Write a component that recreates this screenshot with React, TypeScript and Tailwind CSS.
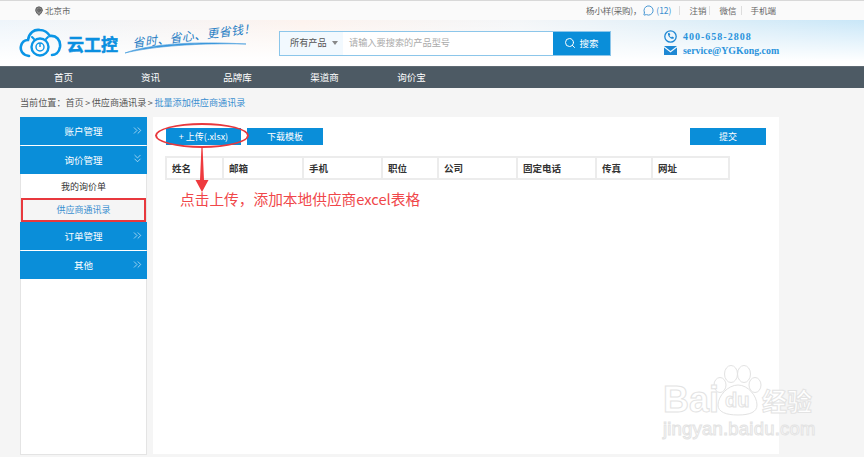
import { ChevronsRight, ChevronsDown, Search, MapPin, MessageCircle } from 'lucide-react';

const cn = "[font-family:'Noto_Sans_CJK_SC','Liberation_Sans',sans-serif]";

const columns = [
  { label: '姓名', width: 'w-[55px]' },
  { label: '邮箱', width: 'w-[80px]' },
  { label: '手机', width: 'w-[79px]' },
  { label: '职位', width: 'w-[56px]' },
  { label: '公司', width: 'w-[79px]' },
  { label: '固定电话', width: 'w-[79px]' },
  { label: '传真', width: 'w-[56px]' },
  { label: '网址', width: 'w-[77px]' },
];

function Logo() {
  return (
    <div className="flex items-center">
      <svg width="44" height="32" viewBox="0 0 44 32" fill="none" className="text-[#0a95e6]">
        <path d="M10 29 C3 28 1 23 2 19 C3 15 6 13 9 13 C10 6 15 2 21 3 C26 3 29 6 31 9 C37 8 42 13 41 20 C40 26 36 28 33 28" stroke="currentColor" strokeWidth="2.6" strokeLinecap="round" />
        <circle cx="21" cy="20" r="8.5" stroke="currentColor" strokeWidth="2.4" />
        <circle cx="21" cy="20" r="4" stroke="currentColor" strokeWidth="1.4" />
        <path d="M21 16v4" stroke="currentColor" strokeWidth="1.4" />
        <path d="M13 10l2 2M29 10l-2 2" stroke="currentColor" strokeWidth="2" strokeLinecap="round" />
      </svg>
      <span className="ml-[4px] text-[17px] leading-none font-bold text-[#0a8fe0] [-webkit-text-stroke:0.5px_#0a8fe0]">云工控</span>
    </div>
  );
}

function Slogan() {
  return (
    <div className="relative ml-[6px] w-[124px] h-[34px]">
      <span className="absolute left-[8px] top-[2px] -rotate-[7deg] italic text-[12px] leading-[14px] tracking-[0.4px] whitespace-nowrap text-[#2a7fc4] [font-family:'Noto_Sans_CJK_SC',serif]">
        省时、省心、更省钱！
      </span>
      <svg width="124" height="34" viewBox="0 0 124 34" className="absolute left-0 top-0" fill="none">
        <path d="M1 27 C25 18 70 15 122 18 C75 17 30 20 1 27Z" fill="#3b97dc" stroke="#3b97dc" strokeWidth="0.6" />
      </svg>
    </div>
  );
}

function TopBar() {
  return (
    <div className="h-[20px] flex items-center bg-[#fafafa] border-t border-[#d8d8d8] text-[8.5px] text-[#666]">
      <div className="ml-[34px] flex items-center gap-[1px]">
        <MapPin size={10} className="text-[#555]" fill="#888" />
        <span>北京市</span>
      </div>
      <div className="ml-auto mr-[88px] flex items-center">
        <span className="tracking-[-0.2px]">杨小样(采购)，</span>
        <MessageCircle size={11} className="text-[#3a8fd0] ml-[2px]" />
        <span className="ml-[2px] text-[#3a8fd0]">(12)</span>
        <span className="ml-[8px] h-[9px] border-l border-[#ddd]" />
        <span className="ml-[9px]">注销</span>
        <span className="ml-[3px] h-[9px] border-l border-[#ddd]" />
        <span className="ml-[9px]">微信</span>
        <span className="ml-[5px] h-[9px] border-l border-[#ddd]" />
        <span className="ml-[8px]">手机端</span>
      </div>
    </div>
  );
}

function Header() {
  return (
    <div className="h-[46px] flex items-center bg-[linear-gradient(180deg,rgba(255,255,255,0)_0%,#ffffff_90%),linear-gradient(90deg,#eef5fb_0%,#fdf3ee_35%,#f4f6f8_60%,#c9e7f8_100%)]">
      <div className="ml-[19px] flex items-center">
        <Logo />
        <Slogan />
      </div>
      <div className="ml-[31px] w-[332px] h-[25px] flex border border-[#8cc6ea] bg-white">
        <div className="w-[63px] flex items-center pl-[10px] gap-[5px] bg-[#f2f9fe] text-[9.2px] text-[#555]">
          <span>所有产品</span>
          <span className="w-0 h-0 border-x-[3.5px] border-x-transparent border-t-[4px] border-t-[#888]" />
        </div>
        <div className="flex-1 flex items-center pl-[6px] text-[9.2px] text-[#aaa]">请输入要搜索的产品型号</div>
        <div className="w-[57px] bg-[#0a8ed9] flex items-center justify-center gap-[3px] text-white text-[9.5px]">
          <Search size={12} />
          <span>搜索</span>
        </div>
      </div>
      <div className="ml-[53px] flex flex-col gap-[1px] text-[#2a93dc] font-bold text-[10px] leading-[13px] [font-family:'Liberation_Serif',serif]">
        <div className="flex items-center gap-[6px]">
          <svg width="13" height="13" viewBox="0 0 13 13" fill="none">
            <circle cx="6.5" cy="6.5" r="5.7" stroke="#1e88d4" strokeWidth="1.3" />
            <path d="M4 3.2l1.3-.5 1 2-.8.7c.3.9.9 1.5 1.8 1.9l.7-.8 2 1-.5 1.3c-2.9.4-5.9-2.6-5.5-5.6z" fill="#1e88d4" />
          </svg>
          <span className="tracking-[1px]">400-658-2808</span>
        </div>
        <div className="flex items-center gap-[6px]">
          <svg width="13" height="9" viewBox="0 0 13 9">
            <path d="M0 0h13L6.5 5z" fill="#1e88d4" />
            <path d="M0 1.5L6.5 6.4 13 1.5V9H0z" fill="#1e88d4" />
          </svg>
          <span className="text-[9.9px]">service@YGKong.com</span>
        </div>
      </div>
    </div>
  );
}

function NavBar() {
  const items = ['首页', '资讯', '品牌库', '渠道商', '询价宝'];
  return (
    <div className="h-[22px] flex items-center bg-[#4d5a64] border-t border-[#5f6a73] text-[9.5px] text-white pl-[20px]">
      {items.map((item) => (
        <span key={item} className="w-[87px] text-center">{item}</span>
      ))}
    </div>
  );
}

function SideHead({ label, open }: { label: string; open?: boolean }) {
  return (
    <div className="relative h-[28px] mb-px -mx-px flex items-center justify-center bg-[#0a8ed9] text-white text-[9.5px]">
      <span>{label}</span>
      {open ? (
        <ChevronsDown size={13} strokeWidth={1.2} className="absolute right-[3px] top-[6px] text-[#e6f4fc]" />
      ) : (
        <ChevronsRight size={13} strokeWidth={1.2} className="absolute right-[3px] top-[7px] text-[#e6f4fc]" />
      )}
    </div>
  );
}

function Sidebar() {
  return (
    <div className="w-[127px] h-[338px] shrink-0 bg-white border-x border-b border-[#e4e4e4]">
      <SideHead label="账户管理" />
      <SideHead label="询价管理" open />
      <div className="h-[23px] flex items-center justify-center text-[9px] text-[#333]">我的询价单</div>
      <div className="h-[24px] flex items-center justify-center bg-[#f5f5f5] border-2 border-[#e8383d] text-[9px] text-[#3a8fd0]">供应商通讯录</div>
      <SideHead label="订单管理" />
      <SideHead label="其他" />
    </div>
  );
}

function Btn({ label, className }: { label: string; className: string }) {
  return (
    <div className={`h-[17px] flex items-center justify-center bg-[#0a8ed9] text-white text-[9px] ${className}`}>
      {label}
    </div>
  );
}

function Main() {
  return (
    <div className="relative w-[626px] h-[337px] ml-[6px] bg-white pt-[11px] pl-[12px]">
      <div className="flex pl-px">
        <Btn label="+ 上传(.xlsx)" className="w-[75px]" />
        <Btn label="下载模板" className="w-[76px] ml-[6px]" />
        <Btn label="提交" className="w-[76px] ml-[367px]" />
      </div>
      <div className="mt-[11px] flex w-[565px] h-[24px] border-2 border-[#ececec]">
        {columns.map((c, i) => (
          <div key={c.label} className={`${c.width} flex items-center pl-[5px] text-[9.5px] font-bold text-[#333] ${i > 0 ? 'border-l-2 border-[#ececec]' : ''}`}>
            {c.label}
          </div>
        ))}
      </div>
      <div className="mt-[9px] ml-[15px] text-[14.7px] leading-[20px] text-[#f0474a] whitespace-nowrap">点击上传，添加本地供应商excel表格</div>

      {/* 红色标注：椭圆和箭头 */}
      <div className="absolute left-[2px] top-[6px] w-[94px] h-[25px] rounded-[50%] border-2 border-[#e8383d]" />
      <svg width="14" height="45" viewBox="0 0 14 45" className="absolute left-[42px] top-[31px]">
        <path d="M6.4 0h1.2L9 32h4.5L7 44 .5 32H5z" fill="#ee3a3e" />
      </svg>
    </div>
  );
}

function Watermark() {
  return (
    <div className="absolute left-[663px] top-[365px] w-[160px] h-[84px] text-white [-webkit-text-stroke:1px_#e3e3e3] [font-family:'Liberation_Sans',sans-serif]">
      <svg width="50" height="52" viewBox="0 0 50 52" className="absolute left-[50px] top-0" fill="#fff" stroke="#e2e2e2" strokeWidth="1">
        <ellipse cx="7" cy="20" rx="6" ry="7.5" />
        <ellipse cx="18" cy="9" rx="6.5" ry="8.5" />
        <ellipse cx="31" cy="9" rx="6.5" ry="8.5" />
        <ellipse cx="42" cy="20" rx="6" ry="7.5" />
        <path d="M25 20c10 0 19 11 19 20 0 7-7 10-19 10S5 47 5 40c0-9 10-20 20-20z" />
      </svg>
      <span className="absolute left-0 top-[15px] text-[36px] leading-[40px] font-bold">Bai</span>
      <span className="absolute left-[62px] top-[25px] text-[20px] leading-[20px] font-bold">du</span>
      <span className={`absolute left-[99px] top-[21px] text-[25px] leading-[28px] font-bold whitespace-nowrap ${cn}`}>经验</span>
      <span className="absolute left-0 top-[53px] text-[18.5px] leading-[22px] whitespace-nowrap tracking-[0.2px]">jingyan.baidu.com</span>
    </div>
  );
}

export default function App() {
  return (
    <div className={`relative w-[864px] h-[457px] overflow-hidden bg-[#f5f5f5] ${cn}`}>
      <TopBar />
      <Header />
      <NavBar />
      <div className="h-[29px] flex items-center pl-[20px] text-[9.1px] text-[#555]">
        <span>当前位置：首页</span>
        <span className="px-[1.5px]">&gt;</span>
        <span>供应商通讯录</span>
        <span className="px-[1.5px]">&gt;</span>
        <span className="text-[#3a8fd0]">批量添加供应商通讯录</span>
      </div>
      <div className="flex pl-[20px]">
        <Sidebar />
        <Main />
      </div>
      <Watermark />
    </div>
  );
}
